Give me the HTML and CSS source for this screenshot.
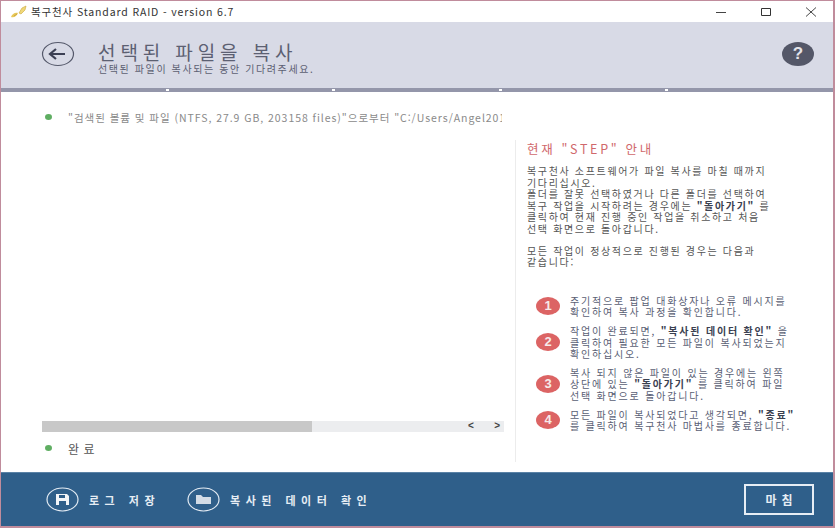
FILE: index.html
```html
<!DOCTYPE html>
<html lang="ko">
<head>
<meta charset="utf-8">
<title>복구천사 Standard RAID</title>
<link rel="stylesheet" href="styles.css">
</head>
<body>
<div class="window">
  <div class="titlebar">
    <svg class="app-icon" width="18" height="14" viewBox="0 0 18 14"><path d="M1 12c1-3 4-5 7-4-1 3-4 5-7 4z" fill="#e8c85a"/><path d="M4 11c1-1 2-1 3-2" stroke="#b89030" stroke-width=".6" fill="none"/><path d="M9 8l3-5 4-2-1 4-4 4z" fill="#f0d878" stroke="#c9a63a" stroke-width=".6"/></svg>
    <span class="app-title">복구천사 Standard RAID - version 6.7</span>
    <div class="win-controls">
      <svg width="12" height="12" viewBox="0 0 12 12"><path d="M1 6.500h10" stroke="#444" stroke-width="1"/></svg>
      <svg width="12" height="12" viewBox="0 0 12 12"><path d="M1.500 2.500h9v7h-9z" fill="none" stroke="#333" stroke-width="1"/></svg>
      <svg width="12" height="12" viewBox="0 0 12 12"><path d="M1 1.500l10 9M11 1.500l-10 9" stroke="#333" stroke-width=".9"/></svg>
    </div>
  </div>
  <header class="header">
    <svg class="back" width="34" height="26" viewBox="0 0 34 26"><ellipse cx="17" cy="13" rx="15.500" ry="11.500" fill="none" stroke="#54586a" stroke-width="1.200"/><path d="M9 13h15M15 8l-6 5 6 5" fill="none" stroke="#3c4054" stroke-width="2.200"/></svg>
    <div class="heading">
      <h1>선택된 파일을 복사</h1>
      <p>선택된 파일이 복사되는 동안 기다려주세요.</p>
    </div>
    <div class="help">?</div>
  </header>
  <div class="steps"><i></i><i></i><i></i><i></i></div>
  <main class="content">
    <div class="status-row top"><span class="dot"></span><span class="path">"검색된 볼륨 및 파일 (NTFS, 27.9 GB, 203158 files)"으로부터 "C:/Users/Angel201</span></div>
    <div class="columns">
      <section class="left">
        <div class="log"></div>
        <div class="scroll"><div class="thumb"></div><span class="arrows"><b>&lt;</b><b>&gt;</b></span></div>
        <div class="status-row done"><span class="dot"></span><span>완료</span></div>
      </section>
      <aside class="guide">
        <h2>현재 "STEP" 안내</h2>
        <p>복구천사 소프트웨어가 파일 복사를 마칠 때까지<br>기다리십시오.<br>폴더를 잘못 선택하였거나 다른 폴더를 선택하여<br>복구 작업을 시작하려는 경우에는 <b>"돌아가기"</b> 를<br>클릭하여 현재 진행 중인 작업을 취소하고 처음<br>선택 화면으로 돌아갑니다.</p>
        <p class="second">모든 작업이 정상적으로 진행된 경우는 다음과<br>같습니다:</p>
        <ol class="items">
          <li><span class="num">1</span><p>주기적으로 팝업 대화상자나 오류 메시지를<br>확인하여 복사 과정을 확인합니다.</p></li>
          <li><span class="num">2</span><p>작업이 완료되면, <b>"복사된 데이터 확인"</b> 을<br>클릭하여 필요한 모든 파일이 복사되었는지<br>확인하십시오.</p></li>
          <li><span class="num">3</span><p>복사 되지 않은 파일이 있는 경우에는 왼쪽<br>상단에 있는 <b>"돌아가기"</b> 를 클릭하여 파일<br>선택 화면으로 돌아갑니다.</p></li>
          <li><span class="num">4</span><p>모든 파일이 복사되었다고 생각되면, <b>"종료"</b><br>를 클릭하여 복구천사 마법사를 종료합니다.</p></li>
        </ol>
      </aside>
    </div>
  </main>
  <footer class="footer">
    <button class="action">
      <svg width="33" height="25" viewBox="0 0 33 25"><ellipse cx="16.500" cy="12.500" rx="15.500" ry="11.500" fill="none" stroke="#e4ecf4" stroke-width="1.200"/><path d="M10 7h11l2 2v9H10z" fill="#f2f5f8"/><path d="M13 8h6v3h-6zM13 14h7v4h-7z" fill="#2f5f8a"/></svg>
      <span>로그 저장</span>
    </button>
    <button class="action">
      <svg width="33" height="25" viewBox="0 0 33 25"><ellipse cx="16.500" cy="12.500" rx="15.500" ry="11.500" fill="none" stroke="#e4ecf4" stroke-width="1.200"/><path d="M9 8h5l2 2h8v7H9z" fill="#d3dce6"/></svg>
      <span>복사된 데이터 확인</span>
    </button>
    <button class="finish">마침</button>
  </footer>
</div>
</body>
</html>
```

FILE: styles.css
```css
* { box-sizing: border-box; }
html, body { margin: 0; height: 100%; }
body { font-family: "Noto Sans CJK KR", "Noto Sans", sans-serif; background: #fff; }
.window { width: 835px; height: 528px; display: flex; flex-direction: column; border: 1px solid #c08c9c; border-right-width: 2px; border-bottom-width: 2px; overflow: hidden; }
.titlebar { height: 21px; flex: none; display: flex; align-items: center; padding-left: 9px; font-size: 10.500px; letter-spacing: .86px; color: #333; }
.app-icon { margin-right: 3px; }
.win-controls { margin-left: auto; display: flex; gap: 33px; padding-right: 16px; }
.header { height: 66px; flex: none; background: #d8dae6; display: flex; align-items: center; padding: 0 19px 0 40px; }
.back { margin-right: 23px; margin-top: -2px; }
.heading { flex: 1; color: #5c6072; padding-top: 5px; }
.heading h1 { margin: 0; font-size: 19px; font-weight: 400; letter-spacing: 4.900px; line-height: 21px; }
.heading p { margin: 1px 0 0; font-size: 10px; letter-spacing: 1.600px; line-height: 12px; }
.help { width: 32px; height: 24px; border-radius: 50%; background: #545768; color: #e4e4ea; font: 700 17px/24px "Liberation Sans", sans-serif; text-align: center; margin-top: -2px; }
.steps { height: 4px; flex: none; background: #9496aa; display: flex; justify-content: space-between; padding: 0 165px; }
.steps i { width: 3px; height: 2px; margin-top: 1px; background: #fff; }
.content { flex: 1; min-height: 0; display: flex; flex-direction: column; padding: 17px 0 0 41px; }
.status-row { display: flex; align-items: center; color: #777; font-size: 10.500px; letter-spacing: .95px; }
.status-row .dot { width: 7px; height: 6px; border-radius: 50%; background: #5fae62; margin: 0 16px 0 3px; flex: none; }
.status-row.top { height: 16px; }
.path { color: #8a8a8a; white-space: nowrap; width: 434px; overflow: hidden; }
.columns { flex: 1; min-height: 0; display: flex; margin-top: 15px; }
.left { width: 462px; display: flex; flex-direction: column; padding-bottom: 16px; }
.log { flex: 1; }
.scroll { height: 11px; background: #ecedef; position: relative; flex: none; }
.thumb { width: 270px; height: 11px; background: #c8c8c8; }
.arrows { position: absolute; right: 0; top: -1px; width: 37px; display: flex; justify-content: space-between; padding: 0 4px 0 1px; font: 700 10px/12px "Liberation Sans", sans-serif; color: #444; }
.done { margin-top: 8px; font-size: 12px; color: #555; height: 16px; letter-spacing: 4.500px; }
.guide { width: 305px; margin-left: 11px; margin-bottom: 10px; border-left: 1px solid #ececec; padding: 0 0 0 11px; color: #555; font-size: 10px; letter-spacing: 1.650px; line-height: 11.600px; }
.guide h2 { margin: 0 0 7px; font-size: 12.500px; font-weight: 400; color: #d0686c; letter-spacing: 2.670px; line-height: 18px; }
.guide p { margin: 0; }
.guide b { color: #3a4050; }
.guide .second { margin-top: 10px; }
.items { list-style: none; margin: 27px 0 0; padding: 0 0 0 9px; display: flex; flex-direction: column; gap: 7px; color: #5a6074; letter-spacing: 1.800px; }
.items li { display: flex; align-items: center; }
.num { width: 24px; height: 18px; border-radius: 50%; background: #dc6464; color: #f6eaea; font: 700 13px/18px "Liberation Sans", sans-serif; letter-spacing: 0; text-align: center; margin-right: 10px; flex: none; }
.footer { height: 54px; flex: none; background: #2f5f8a; display: flex; align-items: center; padding: 0 19px 0 45px; gap: 27px; border-top: 1px solid #5a82a6; }
.action { display: flex; align-items: center; gap: 10px; background: none; border: 0; padding: 0; color: #e6edf4; font: 700 11px "Noto Sans CJK KR", sans-serif; letter-spacing: 5.500px; }
.finish { margin-left: auto; width: 70px; height: 31px; padding: 0 0 0 5px; background: none; border: 2px solid #e6edf4; color: #e6edf4; font: 700 12px "Noto Sans CJK KR", sans-serif; letter-spacing: 5px; }
```
